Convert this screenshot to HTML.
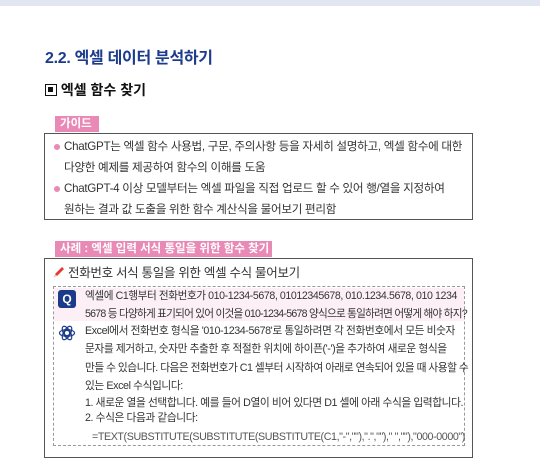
<!DOCTYPE html>
<html><head><meta charset="utf-8"><style>
*{margin:0;padding:0;box-sizing:border-box}
body{width:540px;height:435px;overflow:hidden;background:#fff;font-family:"Liberation Sans","Noto Sans CJK KR",sans-serif;color:#222;position:relative}
.a{position:absolute;white-space:nowrap}
.top{left:0;top:0;width:540px;height:6px;background:#e2e6f0}
.h1{left:45px;top:44px;font-size:16px;font-weight:bold;color:#1d3b8c;letter-spacing:-0.3px}
.h2{left:45px;top:80px;font-size:14px;font-weight:bold;color:#111}
.tag{background:#e889b6;color:#fff;font-size:11.5px;font-weight:bold;padding:0 5px;height:16px;line-height:16px}
.box{border:1px solid #555;left:44px;width:429px}
.t{font-size:11.6px;color:#333;letter-spacing:-0.3px;line-height:14px}
.dot{width:6px;height:6px;border-radius:50%;background:#e889b6}
.s{font-size:10.7px;color:#333;letter-spacing:-0.4px;line-height:14px}
</style></head><body>
<div class="a top"></div>
<div class="a h1">2.2. 엑셀 데이터 분석하기</div>
<div class="a h2"><span style="display:inline-block;width:12px;height:12px;border:1.5px solid #111;vertical-align:-1px;position:relative"><span style="position:absolute;left:2px;top:2px;width:5px;height:5px;background:#111"></span></span> 엑셀 함수 찾기</div>
<div class="a tag" style="left:55px;top:116px;width:44px">가이드</div>
<div class="a box" style="top:133px;height:87px"></div>
<div class="a dot" style="left:54px;top:144px"></div>
<div class="a t" style="left:64px;top:140px">ChatGPT는 엑셀 함수 사용법, 구문, 주의사항 등을 자세히 설명하고, 엑셀 함수에 대한</div>
<div class="a t" style="left:64px;top:161px">다양한 예제를 제공하여 함수의 이해를 도움</div>
<div class="a dot" style="left:54px;top:186px"></div>
<div class="a t" style="left:64px;top:182px">ChatGPT-4 이상 모델부터는 엑셀 파일을 직접 업로드 할 수 있어 행/열을 지정하여</div>
<div class="a t" style="left:64px;top:203px">원하는 결과 값 도출을 위한 함수 계산식을 물어보기 편리함</div>
<div class="a tag" style="left:55px;top:241px;width:217px">사례 : 엑셀 입력 서식 통일을 위한 함수 찾기</div>
<div class="a box" style="top:258px;height:200px"></div>
<svg class="a" style="left:52px;top:265px" width="14" height="14" viewBox="0 0 14 14"><path d="M3 9 L10 2 L12 4 L5 11 Z" fill="#e53935"/><path d="M3 9 L5 11 L1.5 12.5 Z" fill="#f5c0a0"/></svg>
<div class="a t" style="left:68px;top:266px;font-size:12.5px">전화번호 서식 통일을 위한 엑셀 수식 물어보기</div>
<div class="a" style="left:53px;top:286px;width:412px;height:160px;border:1px dashed #999"></div>
<div class="a" style="left:54px;top:288px;width:410px;height:33px;background:#fcf0f6"></div>
<div class="a" style="left:58px;top:290px;width:18px;height:18px;border-radius:3px;background:#1b3a8a;color:#fff;font-weight:bold;font-size:12px;text-align:center;line-height:18px">Q</div>
<div class="a s" style="left:85px;top:289px;font-size:10.6px;letter-spacing:-0.4px">엑셀에 C1행부터 전화번호가 010-1234-5678, 01012345678, 010.1234.5678, 010 1234</div>
<div class="a s" style="left:85px;top:307px;font-size:10.6px;letter-spacing:-0.75px">5678 등 다양하게 표기되어 있어 이것을 010-1234-5678 양식으로 통일하려면 어떻게 해야 하지?</div>
<svg class="a" style="left:58px;top:324px" width="18" height="18" viewBox="0 0 24 24" fill="none" stroke="#1b3a8a" stroke-width="1.6"><circle cx="12" cy="12" r="3.5"/><ellipse cx="12" cy="12" rx="10" ry="4.5"/><ellipse cx="12" cy="12" rx="10" ry="4.5" transform="rotate(60 12 12)"/><ellipse cx="12" cy="12" rx="10" ry="4.5" transform="rotate(120 12 12)"/></svg>
<div class="a s" style="left:85px;top:324px">Excel에서 전화번호 형식을 '010-1234-5678'로 통일하려면 각 전화번호에서 모든 비숫자</div>
<div class="a s" style="left:85px;top:342px">문자를 제거하고, 숫자만 추출한 후 적절한 위치에 하이픈('-')을 추가하여 새로운 형식을</div>
<div class="a s" style="left:85px;top:361px;letter-spacing:-0.5px">만들 수 있습니다. 다음은 전화번호가 C1 셀부터 시작하여 아래로 연속되어 있을 때 사용할 수</div>
<div class="a s" style="left:85px;top:379px">있는 Excel 수식입니다:</div>
<div class="a s" style="left:85px;top:396px">1. 새로운 열을 선택합니다. 예를 들어 D열이 비어 있다면 D1 셀에 아래 수식을 입력합니다.</div>
<div class="a s" style="left:85px;top:411px">2. 수식은 다음과 같습니다:</div>
<div class="a s" style="left:92px;top:430px;color:#555">=TEXT(SUBSTITUTE(SUBSTITUTE(SUBSTITUTE(C1,"-",""),".","")," ",""),"000-0000")</div>
</body></html>
